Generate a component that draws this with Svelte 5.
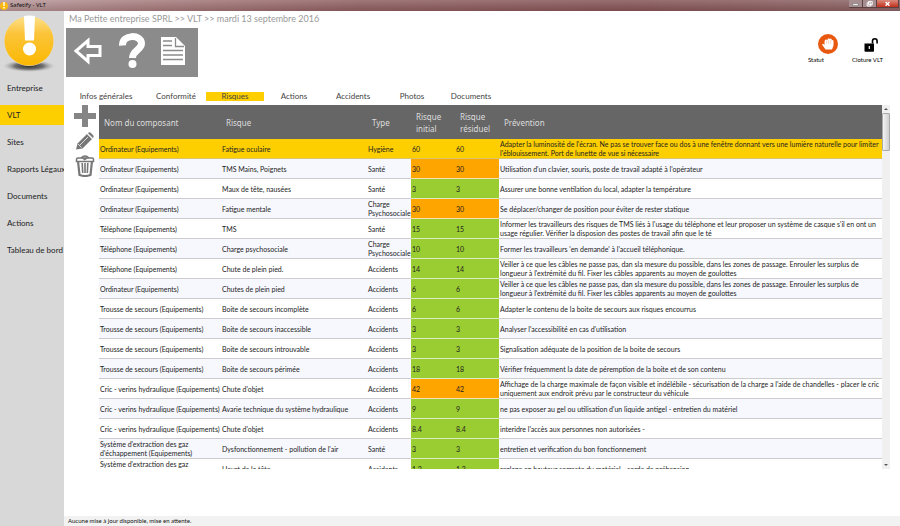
<script>
    let menu = ["Entreprise", "VLT", "Sites", "Rapports Légaux", "Documents", "Actions", "Tableau de bord"];
    let activeMenu = "VLT";

    let tabs = ["Infos générales", "Conformité", "Risques", "Actions", "Accidents", "Photos", "Documents"];
    let activeTab = "Risques";

    let selected = 0;

    const ordi = "Ordinateur (Equipements)";
    const tel = "Téléphone (Equipements)";
    const trousse = "Trousse de secours (Equipements)";
    const cric = "Cric - verins hydraulique (Equipements)";
    const gaz = "Système d'extraction des gaz\nd'échappement (Equipements)";
    const cables = "Veiller à ce que les câbles ne passe pas, dan sla mesure du possible, dans les zones de passage. Enrouler les surplus de\nlongueur à l'extrémité du fil. Fixer les câbles apparents au moyen de goulottes";

    const rows = [
        { nom: ordi, risque: "Fatigue oculaire", type: "Hygiène", initial: 60, residuel: 60, prevention: "Adapter la luminosité de l'écran. Ne pas se trouver face ou dos à une fenêtre donnant vers une lumière naturelle pour limiter\nl'éblouissement. Port de lunette de vue si nécessaire" },
        { nom: ordi, risque: "TMS Mains, Poignets", type: "Santé", initial: 30, residuel: 30, prevention: "Utilisation d'un clavier, souris, poste de travail adapté à l'opérateur" },
        { nom: ordi, risque: "Maux de tête, nausées", type: "Santé", initial: 3, residuel: 3, prevention: "Assurer une bonne ventilation du local, adapter la température" },
        { nom: ordi, risque: "Fatigue mentale", type: "Charge\nPsychosociale", initial: 30, residuel: 30, prevention: "Se déplacer/changer de position pour éviter de rester statique" },
        { nom: tel, risque: "TMS", type: "Santé", initial: 15, residuel: 15, prevention: "Informer les travailleurs des risques de TMS liés à l'usage du téléphone et leur proposer un système de casque s'il en ont un\nusage régulier. Vérifier la disposion des postes de travail afin que le té" },
        { nom: tel, risque: "Charge psychosociale", type: "Charge\nPsychosociale", initial: 10, residuel: 10, prevention: "Former les travailleurs 'en demande' à l'accueil téléphonique." },
        { nom: tel, risque: "Chute de plein pied.", type: "Accidents", initial: 14, residuel: 14, prevention: cables },
        { nom: ordi, risque: "Chutes de plein pied", type: "Accidents", initial: 6, residuel: 6, prevention: cables },
        { nom: trousse, risque: "Boite de secours incomplète", type: "Accidents", initial: 6, residuel: 6, prevention: "Adapter le contenu de la boite de secours aux risques encourrus" },
        { nom: trousse, risque: "Boite de secours inaccessible", type: "Accidents", initial: 3, residuel: 3, prevention: "Analyser l'accessibilité en cas d'utilisation" },
        { nom: trousse, risque: "Boite de secours introuvable", type: "Accidents", initial: 3, residuel: 3, prevention: "Signalisation adéquate de la position de la boite de secours" },
        { nom: trousse, risque: "Boite de secours périmée", type: "Accidents", initial: 18, residuel: 18, prevention: "Vérifier fréquemment la date de péremption de la boite et de son contenu" },
        { nom: cric, risque: "Chute d'objet", type: "Accidents", initial: 42, residuel: 42, prevention: "Affichage de la charge maximale de façon visible et indélébile - sécurisation de la charge a l'aide de chandelles - placer le cric\nuniquement aux endroit prévu par le constructeur du véhicule" },
        { nom: cric, risque: "Avarie technique du système hydraulique", type: "Accidents", initial: 9, residuel: 9, prevention: "ne pas exposer au gel ou utilisation d'un liquide antigel - entretien du matériel" },
        { nom: cric, risque: "Chute d'objet", type: "Accidents", initial: 8.4, residuel: 8.4, prevention: "interidre l'accès aux personnes non autorisées -" },
        { nom: gaz, risque: "Dysfonctionnement - pollution de l'air", type: "Santé", initial: 3, residuel: 3, prevention: "entretien et verification du bon fonctionnement" },
        { nom: gaz, risque: "Heurt de la tête", type: "Accidents", initial: 1.2, residuel: 1.2, prevention: "reglage en hauteur correcte du matériel - corde de préhension" }
    ];

    const level = (value) => (value >= 20 ? "medium" : "low");
</script>

<div class="window">
    <header class="titlebar">
        <svg class="app-icon" viewBox="0 0 8 8" aria-hidden="true">
            <circle cx="4" cy="4" r="4" fill="#fbb90f" />
            <path d="M3.3 0h1.4v4H3.3zM3.3 5h1.4v1.4H3.3z" fill="#fff" />
        </svg>
        <span class="title">Safetify - VLT</span>
        <div class="window-buttons">
            <button aria-label="Réduire">
                <svg viewBox="0 0 14 8"><path d="M4 4h6v2H4z" fill="#fff" stroke="#555" stroke-width=".5" /></svg>
            </button>
            <button aria-label="Agrandir">
                <svg viewBox="0 0 14 8"><path d="M6 1.5h4v3.5H6zM4.500 3h4v3.500h-4z" fill="#a58d90" stroke="#fff" /></svg>
            </button>
            <button class="close" aria-label="Fermer">
                <svg viewBox="0 0 22 8"><path d="M9 2l4 4M13 2l-4 4" stroke="#fff" stroke-width="1.500" /></svg>
            </button>
        </div>
    </header>

    <div class="body">
        <aside>
            <svg class="logo" viewBox="0 0 56 62" aria-hidden="true">
                <defs>
                    <linearGradient id="ball" x1="0" y1="0" x2="0" y2="1">
                        <stop offset="0" stop-color="#fde08a" />
                        <stop offset=".35" stop-color="#fbc43a" />
                        <stop offset="1" stop-color="#fbb800" />
                    </linearGradient>
                    <radialGradient id="shade">
                        <stop offset="0" stop-color="#2c2c2c" />
                        <stop offset=".55" stop-color="#555" stop-opacity=".8" />
                        <stop offset="1" stop-color="#aaa" stop-opacity="0" />
                    </radialGradient>
                </defs>
                <ellipse cx="27" cy="53" rx="26" ry="6" fill="url(#shade)" />
                <circle cx="27" cy="28" r="25" fill="#e4dcc4" />
                <circle cx="27" cy="28" r="24.500" fill="url(#ball)" />
                <path d="M22 3q5.500-1 11 0l-1 24.500h-9z" fill="#fff" />
                <circle cx="27.500" cy="36" r="6.500" fill="#fff" />
            </svg>
            <nav>
                {#each menu as item}
                    <a href="#menu" class:active={item === activeMenu} on:click|preventDefault={() => (activeMenu = item)}>{item}</a>
                {/each}
            </nav>
        </aside>

        <main>
            <div class="breadcrumb">Ma Petite entreprise SPRL &gt;&gt; VLT &gt;&gt; mardi 13 septembre 2016</div>

            <div class="top">
                <div class="toolbar">
                    <button aria-label="Retour">
                        <svg viewBox="0 0 30 28" width="30" height="28">
                            <path d="M3 14L15 3.500v6h12v9H15v6z" fill="none" stroke="#fff" stroke-width="3" />
                        </svg>
                    </button>
                    <button aria-label="Aide">
                        <svg viewBox="0 0 28 36" width="28" height="36">
                            <path d="M4.500 12.500C4 1 23.500 1 23.500 10.500C23.500 17 14.500 17 14.500 25" fill="none" stroke="#fff" stroke-width="7" />
                            <circle cx="14.500" cy="31" r="4" fill="#fff" />
                        </svg>
                    </button>
                    <button aria-label="Rapport">
                        <svg viewBox="0 0 24 28" width="24" height="28">
                            <path d="M0 0h15l9 9v19H0z" fill="#fff" />
                            <path d="M14.500 1v8.500H23M2 4h9M2 8.500h9M2 13.500h20M2 18h20M2 22.500h20" fill="none" stroke="#8b8b8b" stroke-width="1.300" />
                        </svg>
                    </button>
                </div>

                <div class="states">
                    <button>
                        <svg viewBox="0 0 20 20" width="20" height="20">
                            <circle cx="10" cy="10" r="10" fill="#e8590f" />
                            <path d="M6 7.500V11l-1.500-1.200-1 .8L7 15.500h6.500l1.500-4V6.500l-1-.5-.8.600V5l-1.100-.5-.9.600-1-.8-1.100.7v1L7.500 5.500 6.500 6z" fill="#fff" transform="translate(.5 0)" />
                            <path d="M8.700 6.500v3.500M10.700 6v4M12.700 6.500v3.500" stroke="#f3b08c" stroke-width=".5" />
                        </svg>
                        <span>Statut</span>
                    </button>
                    <button>
                        <svg viewBox="1 0 20 20" width="20" height="20">
                            <path d="M3.500 9.500h9.500v7.500q0 .8-.8.800H4.300q-.8 0-.8-.8z" fill="#000" />
                            <path d="M11.500 9.500V7a2.300 2.300 0 0 1 4.600 0V9.500" fill="none" stroke="#000" stroke-width="1.600" />
                            <path d="M7.700 12h1.200v3h-1.200z" fill="#fff" />
                        </svg>
                        <span>Cloture VLT</span>
                    </button>
                </div>
            </div>

            <div class="tabs">
                {#each tabs as tab}
                    <button class:active={tab === activeTab} on:click={() => (activeTab = tab)}>{tab}</button>
                {/each}
            </div>

            <div class="content">
                <div class="row-actions">
                    <button aria-label="Ajouter">
                        <svg viewBox="0 0 22 22" width="22" height="22"><path d="M8 0h6v8h8v6h-8v8H8v-8H0V8h8z" fill="#858585" /></svg>
                    </button>
                    <button aria-label="Modifier">
                        <svg viewBox="0 0 18 18" width="18" height="18">
                            <path d="M0 17.500l1.500-6L11 2l5 5-9.500 9.500z" fill="#777" />
                            <path d="M12 1.200q1.500-1.700 3.200 0l1.700 1.700q1.500 1.500 0 3.100z" fill="#777" />
                            <path d="M4 13L12 5M2 12l3.500 3.500M11 1.500l5.500 5.500" stroke="#e8e8e8" stroke-width=".9" />
                        </svg>
                    </button>
                    <button aria-label="Supprimer">
                        <svg viewBox="0 0 20 22" width="20" height="22">
                            <path d="M3 6l1.500 14q5.500 2 11 0L17 6" fill="none" stroke="#777" stroke-width="2.200" />
                            <path d="M1.500 6.500V4.500q0-1.500 1.500-1.500h14q1.500 0 1.500 1.500v2z" fill="#fff" stroke="#777" stroke-width="1.500" />
                            <path d="M6 3Q10-1 14 3M8 3l1.500 1.500L12 3" fill="none" stroke="#777" stroke-width="1.500" />
                            <path d="M7.200 8l.5 10M10 8v10M12.800 8l-.5 10" stroke="#777" stroke-width="1.600" />
                        </svg>
                    </button>
                </div>

                <div class="grid">
                    <table>
                        <colgroup>
                            <col class="c-nom">
                            <col class="c-risque">
                            <col class="c-num">
                            <col class="c-num">
                            <col class="c-num">
                            <col>
                        </colgroup>
                        <thead>
                            <tr>
                                <th>Nom du composant</th>
                                <th>Risque</th>
                                <th>Type</th>
                                <th>Risque<br>initial</th>
                                <th>Risque<br>résiduel</th>
                                <th>Prévention</th>
                            </tr>
                        </thead>
                        <tbody>
                            {#each rows as row, i}
                                <tr class:selected={i === selected} on:click={() => (selected = i)}>
                                    <td>{row.nom}</td>
                                    <td>{row.risque}</td>
                                    <td>{row.type}</td>
                                    <td class={level(row.initial)}>{row.initial}</td>
                                    <td class={level(row.residuel)}>{row.residuel}</td>
                                    <td>{row.prevention}</td>
                                </tr>
                            {/each}
                        </tbody>
                    </table>
                </div>

                <div class="scrollbar">
                    <svg viewBox="0 0 8 8" width="8" height="8"><path d="M4 3l2 2H2z" fill="#555" /></svg>
                    <div class="thumb"></div>
                    <svg viewBox="0 0 8 8" width="8" height="8"><path d="M4 5L2 3h4z" fill="#555" /></svg>
                </div>
            </div>

            <footer>Aucune mise à jour disponible, mise en attente.</footer>
        </main>
    </div>
</div>

<style>
    :global(body) {
        margin: 0;
    }

    .window {
        display: flex;
        flex-direction: column;
        height: 100vh;
        background: #fff;
        color: #222;
        font-family: Lato, sans-serif;
        font-size: 6px;
        line-height: 9px;
        overflow: hidden;
    }

    button {
        display: block;
        padding: 0;
        border: 0;
        background: none;
        color: inherit;
        font: inherit;
        cursor: pointer;
    }

    svg {
        display: block;
    }

    .titlebar {
        display: flex;
        flex: none;
        align-items: center;
        height: 11px;
        background: linear-gradient(180deg, rgba(255, 255, 255, .15), rgba(60, 20, 20, .15)), linear-gradient(90deg, #b99a9c 0, #a87f81 15%, #8f6062 40%, #855557 70%, #8b6466 100%);
    }

    .app-icon {
        width: 8px;
        height: 8px;
        margin-right: 2px;
    }

    .title {
        flex: 1;
        color: #111;
        font-family: "Noto Sans", sans-serif;
    }

    .window-buttons {
        display: flex;
        align-self: flex-start;
        margin-right: 1px;
    }

    .window-buttons button {
        width: 14px;
        height: 8px;
        border-right: 1px solid #5b3f41;
        border-bottom: 1px solid #5b3f41;
        background: #a58d90;
    }

    .window-buttons .close {
        width: 22px;
        background: linear-gradient(#d98a7c, #c3301a);
    }

    .body {
        display: flex;
        flex: 1;
        min-height: 0;
    }

    aside {
        flex: none;
        width: 64px;
        background: #d8d8d8;
        overflow: hidden;
    }

    .logo {
        width: 56px;
        height: 62px;
        margin: 2px 0 3px 2px;
    }

    nav {
        display: flex;
        flex-direction: column;
        gap: 7px;
    }

    nav a {
        padding-left: 7px;
        color: #222;
        font-size: 8px;
        line-height: 20px;
        text-decoration: none;
        white-space: nowrap;
    }

    nav a.active {
        background: #fecf00;
    }

    main {
        display: flex;
        flex: 1;
        flex-direction: column;
        min-width: 0;
    }

    .breadcrumb {
        padding: 1px 5px 2px;
        color: #999;
        font-size: 9px;
        line-height: 14px;
    }

    .top {
        display: flex;
        justify-content: space-between;
        padding: 0 18px 0 2px;
    }

    .toolbar {
        display: flex;
        align-items: center;
        justify-content: space-around;
        box-sizing: border-box;
        width: 132px;
        height: 49px;
        padding: 0 6px 4px 0;
        background: #8b8b8b;
    }

    .states {
        display: flex;
        gap: 14px;
        padding-top: 6px;
    }

    .states button {
        display: flex;
        flex-direction: column;
        align-items: flex-end;
        gap: 1px;
        width: 30px;
        color: #000;
        white-space: nowrap;
    }

    .states span {
        align-self: flex-start;
    }

    .tabs {
        display: flex;
        padding: 15px 0 4px 2px;
        font-size: 8px;
        line-height: 9px;
    }

    .tabs button {
        width: 58px;
        margin-right: 1px;
        color: #444;
    }

    .tabs button:first-child {
        width: 80px;
    }

    .tabs .active {
        background: #fecf00;
    }

    .content {
        display: flex;
        flex: 1;
        min-height: 0;
        margin: 0 10px 47px 2px;
    }

    .row-actions {
        display: flex;
        flex: none;
        flex-direction: column;
        align-items: center;
        gap: 5px;
        width: 22px;
        padding: 0 3px 0 8px;
    }

    .grid {
        flex: 1;
        min-width: 0;
        overflow: hidden;
    }

    table {
        width: 100%;
        border-spacing: 0;
        table-layout: fixed;
    }

    .c-nom {
        width: 122px;
    }

    .c-risque {
        width: 146px;
    }

    .c-num {
        width: 44px;
    }

    th {
        height: 34px;
        padding: 1px 5px 0;
        box-sizing: border-box;
        background: #666;
        color: #ddd;
        font-family: "Noto Sans", sans-serif;
        font-size: 8px;
        font-weight: 400;
        line-height: 12px;
        text-align: left;
    }

    td {
        box-sizing: border-box;
        height: 20px;
        padding: 1px 1px 0;
        border-bottom: 1px solid #ccc;
        font-size: 7px;
        white-space: pre;
    }

    tbody tr:nth-child(even) {
        background: #f7f8fe;
    }

    .low {
        border-color: #dcebc0;
        background: #9acd32;
    }

    .medium {
        border-color: #f6dfb4;
        background: #ffa500;
    }

    .selected td {
        border-color: #d9c46a;
        background: #fecf00;
    }

    .scrollbar {
        display: flex;
        flex: none;
        flex-direction: column;
        width: 8px;
        background: #f0f0f0;
    }

    .thumb {
        width: 6px;
        height: 36px;
        margin: 0 0 auto;
        border: 1px solid #aaa;
        border-radius: 1px;
        background: linear-gradient(90deg, #f3f3f3, #cfcfd2);
    }

    footer {
        height: 10px;
        padding-left: 4px;
        background: #f2f2f2;
        color: #111;
        line-height: 10px;
    }
</style>
